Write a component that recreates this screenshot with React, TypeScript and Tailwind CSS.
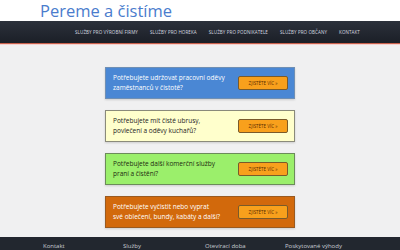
import React from "react";

const nav = [
  "Služby pro výrobní firmy",
  "Služby pro horeka",
  "Služby pro podnikatele",
  "Služby pro občany",
  "Kontakt",
];

const cards = [
  {
    text: ["Potřebujete udržovat pracovní oděvy", "zaměstnanců v čistotě?"],
    box: "bg-[#4a87d4] border-[#6f8fb4] text-white",
  },
  {
    text: ["Potřebujete mít čisté ubrusy,", "povlečení a oděvy kuchařů?"],
    box: "bg-[#ffffcc] border-[#8a8a7a] text-[#222]",
  },
  {
    text: ["Potřebujete další komerční služby", "praní a čistění?"],
    box: "bg-[#9bef6b] border-[#6c8c5a] text-[#1d2a10]",
  },
  {
    text: ["Potřebujete vyčistit nebo vyprat", "své oblečení, bundy, kabáty a další?"],
    box: "bg-[#d2690c] border-[#9a5a20] text-white",
  },
];

const foot = [
  { t: "Kontakt", w: "w-[80px]" },
  { t: "Služby", w: "w-[82px]" },
  { t: "Otevírací doba", w: "w-[80px]" },
  { t: "Poskytované výhody", w: "w-[110px]" },
];

export default function App() {
  return (
    <div className="w-[400px] h-[250px] overflow-hidden bg-[#f0f0f1] flex flex-col font-['Open_Sans',sans-serif]">
      <div className="bg-white h-[21px] shrink-0 flex items-center pl-[40px]">
        <h1 className="text-[#4a7ccd] text-[16.5px] leading-[21px]">Pereme a čistíme</h1>
      </div>
      <div className="h-[22px] shrink-0 bg-gradient-to-b from-[#2c313b] to-[#1b1f27] flex items-center pl-[75px] gap-[12px]">
        {nav.map((n) => (
          <span key={n} className="text-[#d8dbe0] text-[4.5px] uppercase tracking-[0.1px]">
            {n}
          </span>
        ))}
      </div>
      <div className="h-[1px] shrink-0 bg-[#c8604c]" />
      <div className="h-[1px] shrink-0 bg-[#f6d0cc]" />
      <div className="flex-1 flex justify-center pt-[22px]">
        <div className="w-[190px] flex flex-col gap-[11px]">
          {cards.map((c, i) => (
            <div
              key={i}
              className={`h-[32px] border flex items-center justify-between pl-[7px] pr-[6px] shadow-[0_1px_2px_rgba(0,0,0,0.15)] ${c.box}`}
            >
              <p className="text-[6.5px] leading-[10px]">
                {c.text[0]}
                <br />
                {c.text[1]}
              </p>
              <span className="w-[50px] h-[14px] rounded-[2px] bg-[#f8a01c] border border-[#7a5a2a] text-[#5a2a00] text-[4.5px] flex items-center justify-center">
                ZJISTĚTE VÍC »
              </span>
            </div>
          ))}
        </div>
      </div>
      <div className="h-[13px] shrink-0 bg-[#22272f] flex items-start pl-[43px] pt-[5px]">
        {foot.map((f) => (
          <span key={f.t} className={`text-[#c8ccd2] text-[6px] leading-[8px] whitespace-nowrap ${f.w}`}>
            {f.t}
          </span>
        ))}
      </div>
    </div>
  );
}
